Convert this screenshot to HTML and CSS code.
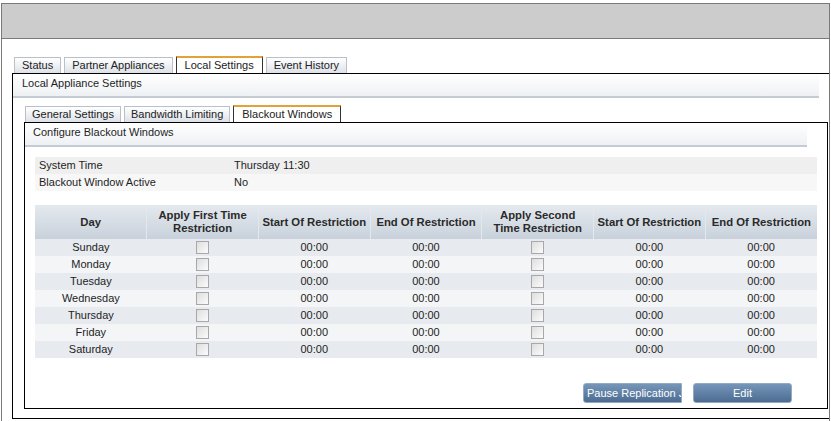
FILE: index.html
```html
<!DOCTYPE html>
<html>
<head>
<meta charset="utf-8">
<link rel="stylesheet" href="styles.css">
</head>
<body>
<div class="frame">
  <div class="topbar"></div>
  <div class="content">
    <div class="tabs">
      <div class="tab">Status</div>
      <div class="tab">Partner Appliances</div>
      <div class="tab active">Local Settings</div>
      <div class="tab">Event History</div>
    </div>
    <div class="panel">
      <div class="panel-head">Local Appliance Settings</div>
      <div class="panel-body">
        <div class="tabs inner-tabs">
          <div class="tab">General Settings</div>
          <div class="tab">Bandwidth Limiting</div>
          <div class="tab active">Blackout Windows</div>
        </div>
        <div class="subpanel">
          <div class="sub-head">Configure Blackout Windows</div>
          <div class="sub-body">
            <div class="info">
              <div class="info-row odd"><span class="info-label">System Time</span><span class="info-value">Thursday 11:30</span></div>
              <div class="info-row even"><span class="info-label">Blackout Window Active</span><span class="info-value">No</span></div>
            </div>
            <table class="grid">
              <thead>
                <tr>
                  <th>Day</th>
                  <th>Apply First Time<br>Restriction</th>
                  <th>Start Of Restriction</th>
                  <th>End Of Restriction</th>
                  <th>Apply Second<br>Time Restriction</th>
                  <th>Start Of Restriction</th>
                  <th>End Of Restriction</th>
                </tr>
              </thead>
              <tbody>
                <tr><td>Sunday</td><td><span class="cb"></span></td><td>00:00</td><td>00:00</td><td><span class="cb"></span></td><td>00:00</td><td>00:00</td></tr>
                <tr><td>Monday</td><td><span class="cb"></span></td><td>00:00</td><td>00:00</td><td><span class="cb"></span></td><td>00:00</td><td>00:00</td></tr>
                <tr><td>Tuesday</td><td><span class="cb"></span></td><td>00:00</td><td>00:00</td><td><span class="cb"></span></td><td>00:00</td><td>00:00</td></tr>
                <tr><td>Wednesday</td><td><span class="cb"></span></td><td>00:00</td><td>00:00</td><td><span class="cb"></span></td><td>00:00</td><td>00:00</td></tr>
                <tr><td>Thursday</td><td><span class="cb"></span></td><td>00:00</td><td>00:00</td><td><span class="cb"></span></td><td>00:00</td><td>00:00</td></tr>
                <tr><td>Friday</td><td><span class="cb"></span></td><td>00:00</td><td>00:00</td><td><span class="cb"></span></td><td>00:00</td><td>00:00</td></tr>
                <tr><td>Saturday</td><td><span class="cb"></span></td><td>00:00</td><td>00:00</td><td><span class="cb"></span></td><td>00:00</td><td>00:00</td></tr>
              </tbody>
            </table>
            <div class="buttons">
              <button class="btn btn-left">Pause Replication Jobs</button>
              <button class="btn">Edit</button>
            </div>
          </div>
        </div>
      </div>
    </div>
  </div>
</div>
</body>
</html>
```
FILE: styles.css
```css
html, body {
  margin: 0;
  padding: 0;
  background: #fff;
  overflow: hidden;
}
body {
  font-family: "Liberation Sans", Arial, sans-serif;
  font-size: 11px;
  color: #1e1e1e;
}
.frame {
  margin: 3px 0 0 1px;
  width: 827px;
  height: 417px;
  border: 1px solid #7a7a7a;
  border-bottom: none;
}
.topbar {
  height: 34px;
  background: #cccccc;
  border-bottom: 1px solid #7a7a7a;
}
.content {
  padding: 17px 0 0 10px;
}
.tabs {
  display: flex;
  align-items: flex-end;
  gap: 3px;
  padding-left: 2px;
  height: 17px;
}
.tab {
  height: 15px;
  line-height: 15px;
  padding: 0 7px;
  border: 1px solid #b9c0c8;
  border-bottom: none;
  background: linear-gradient(#ffffff, #dde2e8);
  color: #222;
  white-space: nowrap;
}
.tab.active {
  border-top: 2px solid #e2a23a;
  border-left: 1px solid #333;
  border-right: 1px solid #333;
  background: #fff;
  padding: 0 8px;
}
.panel {
  border: 1px solid #000;
  border-right: none;
  height: 344px;
}
.panel-head {
  height: 22px;
  line-height: 19px;
  padding-left: 9px;
  margin-right: 10px;
  background: linear-gradient(#ffffff, #eef1f4);
  border-bottom: 2px solid #c4cbd3;
}
.panel-body {
  padding: 7px 1px 0 11px;
}
.inner-tabs {
  padding-left: 1px;
}
.inner-tabs .tab {
  padding: 0 6px;
}
.inner-tabs .tab.active {
  padding: 0 8px;
}
.subpanel {
  border: 1px solid #000;
}
.sub-head {
  height: 22px;
  line-height: 19px;
  padding-left: 8px;
  margin-right: 20px;
  background: linear-gradient(#ffffff, #eef1f4);
  border-bottom: 2px solid #c4cbd3;
}
.sub-body {
  padding: 10px 10px 5px 10px;
}
.info-row {
  display: flex;
  height: 17px;
  line-height: 17px;
}
.info-row.odd { background: #efefef; }
.info-row.even { background: #f7f7f7; }
.info-label {
  width: 195px;
  padding-left: 4px;
}
.grid {
  width: 100%;
  margin-top: 14px;
  border-collapse: collapse;
  table-layout: fixed;
}
.grid th {
  height: 34px;
  padding: 0 2px;
  font-weight: bold;
  font-size: 11.3px;
  line-height: 13px;
  color: #2a2a2a;
  background: linear-gradient(#e4e9ee, #c8d1db);
  border-left: 1px solid #e4e8ed;
  text-align: center;
  vertical-align: middle;
  white-space: nowrap;
}
.grid th:first-child {
  border-left: none;
}
.grid td {
  height: 17px;
  padding: 0;
  line-height: 17px;
  text-align: center;
  vertical-align: middle;
}
.grid tbody tr:nth-child(odd) { background: #e7ebef; }
.grid tbody tr:nth-child(even) { background: #f3f5f7; }
.cb {
  display: inline-block;
  width: 11px;
  height: 11px;
  border: 1px solid #a8a8a8;
  background: linear-gradient(135deg, #dedede, #fbfbfb);
  vertical-align: middle;
  margin-top: -2px;
}
.buttons {
  display: flex;
  justify-content: flex-end;
  gap: 11px;
  margin-top: 25px;
  padding-right: 25px;
}
.btn {
  width: 99px;
  height: 20px;
  padding: 0;
  border: 1px solid #93aac2;
  border-radius: 3px;
  background: linear-gradient(#7596b9, #4c6c91);
  color: #fff;
  font-family: "Liberation Sans", Arial, sans-serif;
  font-size: 11px;
  line-height: 14px;
  text-align: center;
  overflow: hidden;
  white-space: nowrap;
}
.btn-left {
  text-align: left;
  padding-left: 3px;
  border-radius: 3px 0 0 3px;
}
```
